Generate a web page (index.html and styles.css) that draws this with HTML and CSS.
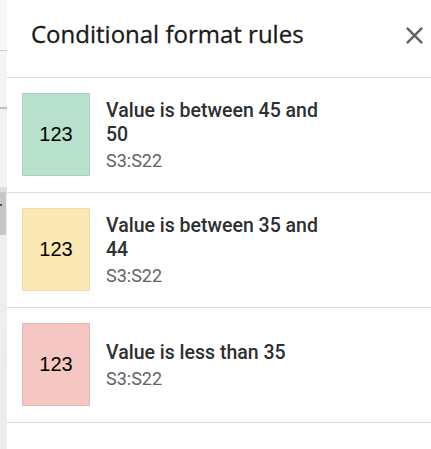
FILE: index.html
```html
<!DOCTYPE html>
<html lang="en">
<head>
<meta charset="utf-8">
<title>Conditional format rules</title>
<link rel="stylesheet" href="styles.css">
</head>
<body>
<div class="app">
  <div class="strip">
    <div class="seg seg-a"></div>
    <div class="seg seg-line"></div>
    <div class="seg seg-b"></div>
    <div class="seg seg-line2"></div>
    <div class="seg seg-c"></div>
    <div class="seg seg-band"></div>
    <div class="seg seg-block"><span class="dot"></span></div>
    <div class="seg seg-d"></div>
  </div>
  <div class="panel">
    <div class="header">
      <h1 class="title">Conditional format rules</h1>
      <button class="close" aria-label="Close">
        <svg viewBox="0 0 24 24" width="29" height="29"><path d="M19 6.41L17.59 5 12 10.59 6.41 5 5 6.41 10.59 12 5 17.59 6.41 19 12 13.41 17.59 19 19 17.59 13.41 12z" fill="#5f6368"/></svg>
      </button>
    </div>
    <div class="rule">
      <div class="swatch green">123</div>
      <div class="info">
        <div class="cond">Value is between 45 and 50</div>
        <div class="range">S3:S22</div>
      </div>
    </div>
    <div class="rule">
      <div class="swatch yellow">123</div>
      <div class="info">
        <div class="cond">Value is between 35 and 44</div>
        <div class="range">S3:S22</div>
      </div>
    </div>
    <div class="rule">
      <div class="swatch red">123</div>
      <div class="info">
        <div class="cond">Value is less than 35</div>
        <div class="range">S3:S22</div>
      </div>
    </div>
  </div>
</div>
</body>
</html>
```

FILE: styles.css
```css
html, body {
  margin: 0;
  padding: 0;
  background: #ffffff;
}
.app {
  display: flex;
  width: 431px;
  height: 449px;
  overflow: hidden;
}
.strip {
  width: 7px;
  flex: none;
  display: flex;
  flex-direction: column;
  background: #eeeeee;
}
.seg { flex: none; }
.seg-a { height: 50px; background: #f8f8f8; }
.seg-line { height: 1px; background: #c9c9c9; }
.seg-b { height: 56px; background: #f4f4f4; }
.seg-line2 { height: 2px; background: #c2c2c2; }
.seg-c { height: 78px; background: #f2f2f2; }
.seg-band { height: 5px; background: #d9dee3; }
.seg-block {
  height: 43px;
  background: #c6c6c6;
  width: 6px;
  display: flex;
  flex-direction: column;
  padding-top: 12px;
  box-sizing: border-box;
}
.dot {
  display: block;
  width: 2px;
  height: 2px;
  background: #555555;
}
.seg-d { flex: 1; background: linear-gradient(#efefef, #ececec); }

.panel {
  flex: 1;
  background: #ffffff;
  display: flex;
  flex-direction: column;
}
.header {
  height: 78px;
  flex: none;
  box-sizing: border-box;
  border-bottom: 1px solid #dadce0;
  display: flex;
  align-items: flex-start;
  justify-content: space-between;
  padding: 0 2px 0 24px;
}
.title {
  margin: 0;
  padding-top: 18px;
  font-family: "Open Sans", sans-serif;
  font-weight: 400;
  font-size: 24px;
  line-height: 32px;
  color: #1a1a1a;
  -webkit-text-stroke: 0.3px #1a1a1a;
}
.close {
  margin-top: 21px;
  padding: 0;
  border: 0;
  background: none;
  width: 29px;
  height: 29px;
  display: flex;
}
.rule {
  height: 115px;
  flex: none;
  box-sizing: border-box;
  border-bottom: 1px solid #dadce0;
  display: flex;
  align-items: flex-start;
  padding: 15px 0 0 15px;
  gap: 16px;
}
.swatch {
  width: 68px;
  height: 83px;
  box-sizing: border-box;
  border: 1px solid rgba(0, 0, 0, 0.07);
  display: flex;
  align-items: center;
  justify-content: center;
  font-family: "Liberation Sans", Arial, sans-serif;
  font-size: 20px;
  color: #000000;
  flex: none;
}
.green { background: #b7e1cd; }
.yellow { background: #fce8b2; border-color: #eadbb0; }
.red { background: #f4c7c3; }
.info {
  width: 226px;
  align-self: center;
  margin-top: -13px;
  font-family: Roboto, "Noto Sans", sans-serif;
}
.cond {
  font-size: 19.5px;
  font-weight: 500;
  line-height: 24px;
  color: #2d2f31;
}
.range {
  margin-top: 2px;
  font-size: 18px;
  line-height: 24px;
  color: #5f6368;
}
```
